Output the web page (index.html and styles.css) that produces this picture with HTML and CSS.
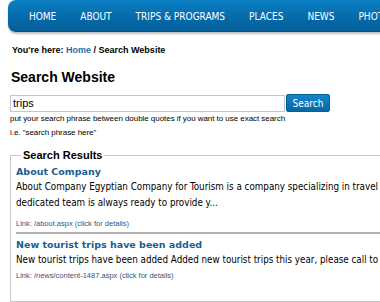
FILE: index.html
```html
<!DOCTYPE html>
<html lang="en">
<head>
    <meta charset="UTF-8">
    <title>Search Website</title>
    <link rel="stylesheet" href="styles.css">
</head>
<body>
<div class="page">
    <div class="topnav">
        <a href="#">HOME</a>
        <a href="#">ABOUT</a>
        <a href="#">TRIPS &amp; PROGRAMS</a>
        <a href="#">PLACES</a>
        <a href="#">NEWS</a>
        <a href="#">PHOTO GALLERY</a>
        <a href="#">CONTACT US</a>
    </div>

    <div class="content">
        <div class="crumbs">You're here: <a href="#">Home</a> / Search Website</div>

        <h1 class="title">Search Website</h1>

        <form class="searchbox" onsubmit="return false;">
            <input type="text" class="searchinput" value="trips">
            <button class="searchbtn">Search</button>
        </form>
        <div class="hint">put your search phrase between double quotes if you want to use exact search</div>
        <div class="hint">i.e. "search phrase here"</div>

        <fieldset class="results">
            <legend>Search Results</legend>

            <div class="result">
                <a class="result-title" href="#">About Company</a>
                <div class="result-text">About Company Egyptian Company for Tourism is a company specializing in travel and tourism services in Egypt, and our dedicated team is always ready to provide y...</div>
                <div class="result-link">Link: /about.aspx (click for details)</div>
            </div>

            <div class="result">
                <a class="result-title" href="#">New tourist trips have been added</a>
                <div class="result-text">New tourist trips have been added Added new tourist trips this year, please call to find out more details</div>
                <div class="result-link">Link: /news/content-1487.aspx (click for details)</div>
            </div>
        </fieldset>
    </div>
</div>
</body>
</html>
```

FILE: styles.css
```css
html, body { margin: 0; padding: 0; overflow: hidden; background: #fff; }
body { font-family: "Liberation Sans", Arial, sans-serif; color: #000; }

.page { width: 596px; }

.topnav {
    display: flex;
    margin-left: 8px;
    height: 31px;
    padding-left: 9px;
    align-items: center;
    background: linear-gradient(#0b80c5, #0569a8 60%, #055f99);
    border-bottom: 1px solid #04507f;
    border-radius: 8px;
    box-shadow: 0 2px 2px rgba(0,0,0,0.25);
}
.topnav a {
    color: #fff;
    text-decoration: none;
    font-family: "DejaVu Sans Condensed", "DejaVu Sans", sans-serif;
    font-size: 10px;
    white-space: nowrap;
    padding: 2px 12px 0;
}

.content { padding: 0 10px; }

.crumbs {
    margin-top: 12px;
    padding-left: 2px;
    font-size: 9px;
    font-weight: bold;
    line-height: 13px;
}
.crumbs a { color: #1f6ea8; text-decoration: none; }

.title {
    margin: 12px 0 0 1px;
    font-size: 14px;
    line-height: 17px;
    font-weight: bold;
}

.searchbox { display: flex; margin: 8px 0 0; gap: 1px; align-items: center; }
.searchinput {
    box-sizing: border-box;
    width: 275px;
    height: 17px;
    margin: 0;
    padding: 0 2px;
    border: 1px solid #c6c6c6;
    font-family: "Liberation Sans", Arial, sans-serif;
    font-size: 11px;
    color: #000;
}
.searchbtn {
    box-sizing: border-box;
    width: 44px;
    height: 18px;
    margin: 0;
    padding: 0;
    border: 1px solid #05609a;
    border-radius: 2px;
    background: linear-gradient(#1585c8, #0568a6);
    color: #fff;
    font-family: "DejaVu Sans Condensed", "DejaVu Sans", sans-serif;
    font-size: 10px;
}

.hint {
    font-size: 8px;
    letter-spacing: -0.05px;
    line-height: 14px;
}

.results {
    margin: 9px 0 0;
    padding: 0 5px 20px;
    border: 1px solid #c8c8c8;
}
.results legend {
    margin-left: 5px;
    padding: 0 2px;
    font-size: 11px;
    font-weight: bold;
}

.result { padding: 3px 0 0; border-bottom: 2px solid #b0b0b0; }
.result:first-of-type { padding-bottom: 3px; }
.result:last-child { border-bottom: none; }
.result-title {
    display: block;
    color: #1a5e91;
    text-decoration: none;
    font-family: "DejaVu Sans", Verdana, sans-serif;
    font-size: 9.5px;
    font-weight: bold;
    line-height: 15px;
}
.result-text {
    font-family: "DejaVu Sans Condensed", "DejaVu Sans", sans-serif;
    font-size: 9.75px;
    line-height: 16px;
}
.result-link {
    margin-top: 2px;
    color: #34567a;
    font-size: 7.5px;
    line-height: 11px;
}
.result:first-of-type .result-link { margin-top: 7px; }
```
